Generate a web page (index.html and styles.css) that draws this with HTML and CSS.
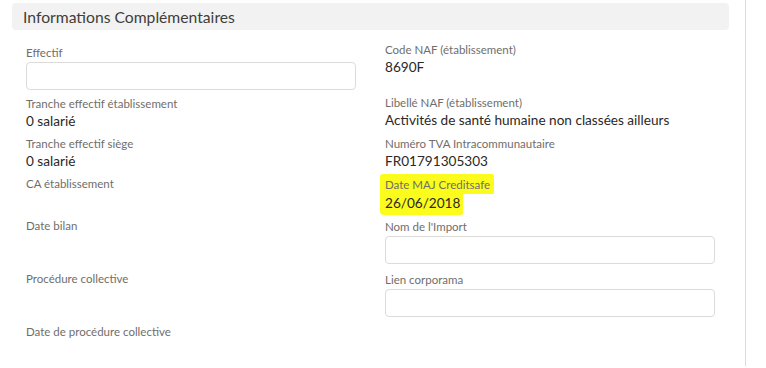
FILE: index.html
```html
<!DOCTYPE html>
<html lang="fr">
<head>
    <meta charset="UTF-8">
    <title>Informations Complémentaires</title>
    <link rel="stylesheet" href="styles.css">
</head>
<body>
    <div class="record-panel">
        <div class="section-header">
            <h3 class="section-title">Informations Complémentaires</h3>
        </div>

        <div class="section-body">
            <div class="form-col left-col">
                <div class="field field-input">
                    <span class="field-label">Effectif</span>
                    <div class="field-box"></div>
                </div>
                <div class="field">
                    <span class="field-label">Tranche effectif établissement</span>
                    <span class="field-value">0 salarié</span>
                </div>
                <div class="field">
                    <span class="field-label">Tranche effectif siège</span>
                    <span class="field-value">0 salarié</span>
                </div>
                <div class="field field-mid">
                    <span class="field-label">CA établissement</span>
                </div>
                <div class="field field-tall">
                    <span class="field-label">Date bilan</span>
                </div>
                <div class="field field-tall">
                    <span class="field-label">Procédure collective</span>
                </div>
                <div class="field field-tall">
                    <span class="field-label">Date de procédure collective</span>
                </div>
            </div>

            <div class="form-col right-col">
                <div class="field field-tall">
                    <span class="field-label">Code NAF (établissement)</span>
                    <span class="field-value">8690F</span>
                </div>
                <div class="field">
                    <span class="field-label">Libellé NAF (établissement)</span>
                    <span class="field-value">Activités de santé humaine non classées ailleurs</span>
                </div>
                <div class="field">
                    <span class="field-label">Numéro TVA Intracommunautaire</span>
                    <span class="field-value">FR01791305303</span>
                </div>
                <div class="field field-mid highlighted">
                    <span class="field-label"><mark class="marker marker-label">Date MAJ Creditsafe</mark></span>
                    <span class="field-value"><mark class="marker marker-value">26/06/2018</mark></span>
                </div>
                <div class="field field-input">
                    <span class="field-label">Nom de l'Import</span>
                    <div class="field-box"></div>
                </div>
                <div class="field field-input">
                    <span class="field-label">Lien corporama</span>
                    <div class="field-box"></div>
                </div>
            </div>
        </div>
    </div>
</body>
</html>
```

FILE: styles.css
```css
body {
    font-family: Lato, 'Open Sans', sans-serif;
    margin: 0;
    padding: 0;
    background: white;
    color: #3e3e3c;
}

.record-panel {
    width: 746px;
    height: 366px;
    border-right: 1px solid #dddbda;
    box-sizing: border-box;
    padding: 3px 16px 0 12px;
}

.section-header {
    background: #f3f2f2;
    border-radius: 4px;
    height: 27px;
    display: flex;
    align-items: center;
    padding-left: 11px;
}

.section-title {
    margin: 0;
    font-size: 15.7px;
    font-weight: 400;
    color: #3e3e3c;
}

.section-body {
    display: grid;
    grid-template-columns: 330px 330px;
    column-gap: 29px;
    padding-left: 14px;
}

.left-col {
    padding-top: 15px;
}

.right-col {
    padding-top: 12px;
}

.form-col {
    display: flex;
    flex-direction: column;
}

.field {
    display: flex;
    flex-direction: column;
    min-height: 41px;
}

.left-col .field {
    min-height: 40px;
}

.field-mid,
.left-col .field-mid {
    min-height: 42px;
}

.field-tall,
.left-col .field-tall {
    min-height: 53px;
}

.field-input {
    min-height: 53px;
}

.left-col .field-input {
    min-height: 51px;
}

.field-label {
    font-size: 11.5px;
    line-height: 16px;
    color: #706e6b;
}

.field-value {
    font-size: 13.6px;
    line-height: 18px;
    color: #2b2826;
}

.field-box {
    height: 28px;
    margin-top: 1px;
    border: 1px solid #dddbda;
    border-radius: 4px;
    box-sizing: border-box;
}

.marker {
    background: #fbfb1c;
    color: inherit;
    display: inline-block;
    margin-left: -5px;
    padding-left: 5px;
}

.marker-label {
    padding: 3px 4px 1px 5px;
    border-radius: 3px 2px 0 0;
    margin-top: -3px;
}

.marker-value {
    padding: 0 3px 3px 5px;
    border-radius: 0 0 2px 4px;
}
```
